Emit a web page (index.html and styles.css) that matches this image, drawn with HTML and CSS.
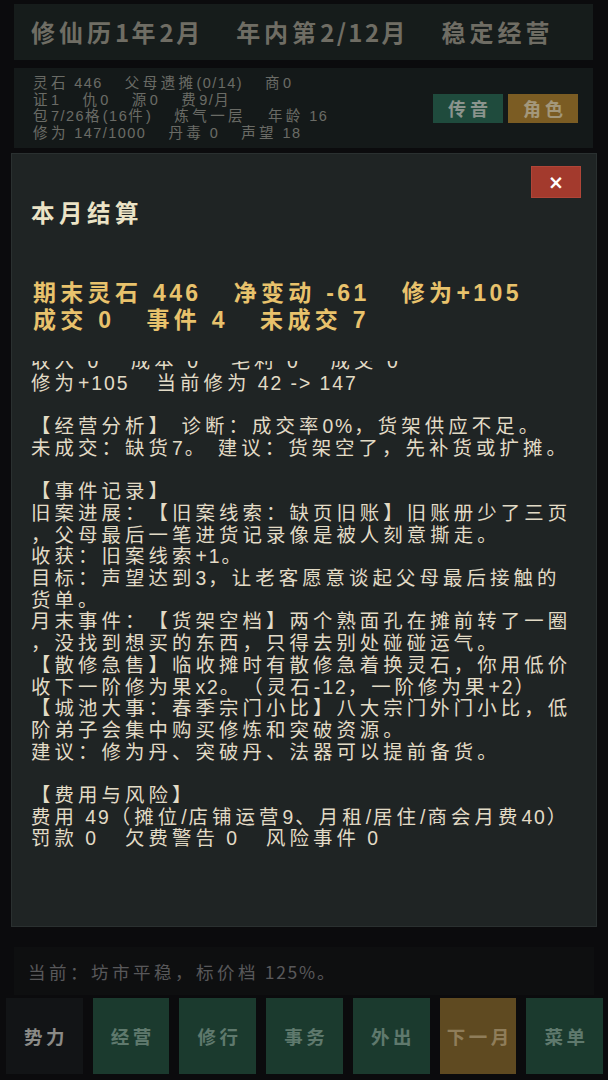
FILE: index.html
```html
<!DOCTYPE html>
<html lang="zh-CN">
<head>
<meta charset="utf-8">
<title>修仙坊市</title>
<link rel="stylesheet" href="styles.css">
</head>
<body>
<div class="app">
  <header class="topbar">
    <span>修仙历<span class="n">1</span>年<span class="n">2</span>月</span>
    <span>年内第<span class="n">2/12</span>月</span>
    <span>稳定经营</span>
  </header>

  <section class="status">
    <div class="stats">
      <div class="stat-row"><span>灵石<span class="n"> 446</span></span><span>父母遗摊<span class="n">(0/14)</span></span><span>商<span class="n">0</span></span></div>
      <div class="stat-row"><span>证<span class="n">1</span></span><span>仇<span class="n">0</span></span><span>源<span class="n">0</span></span><span>费<span class="n">9/</span>月</span></div>
      <div class="stat-row"><span>包<span class="n">7/26</span>格<span class="n">(16</span>件<span class="n">)</span></span><span>炼气一层</span><span>年龄<span class="n"> 16</span></span></div>
      <div class="stat-row"><span>修为<span class="n"> 147/1000</span></span><span>丹毒<span class="n"> 0</span></span><span>声望<span class="n"> 18</span></span></div>
    </div>
    <div class="status-actions">
      <button class="chip chip-green">传音</button>
      <button class="chip chip-gold">角色</button>
    </div>
  </section>

  <main class="stage"></main>

  <div class="ticker">当前：坊市平稳，标价档<span class="n"> 125%</span>。</div>

  <nav class="dock">
    <button class="dock-btn dock-dark">势力</button>
    <button class="dock-btn">经营</button>
    <button class="dock-btn">修行</button>
    <button class="dock-btn">事务</button>
    <button class="dock-btn">外出</button>
    <button class="dock-btn dock-gold">下一月</button>
    <button class="dock-btn">菜单</button>
  </nav>
</div>

<div class="backdrop">
  <div class="modal">
    <div class="modal-top">
      <button class="close">×</button>
    </div>
    <h2 class="modal-title">本月结算</h2>
    <div class="summary">
      <div class="summary-row"><span>期末灵石 <span class="n">446</span></span><span>净变动 <span class="n">-61</span></span><span>修为<span class="n">+105</span></span></div>
      <div class="summary-row"><span>成交 <span class="n">0</span></span><span>事件 <span class="n">4</span></span><span>未成交 <span class="n">7</span></span></div>
    </div>
    <div class="report">
      <div class="log">
        <div class="log-block">
          <p class="ln">收入 0   成本 0   毛利 0   成交 0</p>
          <p class="ln ln-row"><span>修为<span class="n">+105</span></span><span>当前修为<span class="n"> 42 -&gt; 147</span></span></p>
        </div>
        <div class="log-block">
          <p class="ln">【经营分析】 诊断：成交率<span class="n">0%</span>，货架供应不足。</p>
          <p class="ln">未成交：缺货<span class="n">7</span>。 建议：货架空了，先补货或扩摊。</p>
        </div>
        <div class="log-block">
          <p class="ln">【事件记录】</p>
          <p class="ln">旧案进展：【旧案线索：缺页旧账】旧账册少了三页</p>
          <p class="ln">，父母最后一笔进货记录像是被人刻意撕走。</p>
          <p class="ln">收获：旧案线索<span class="n">+1</span>。</p>
          <p class="ln">目标：声望达到<span class="n">3</span>，让老客愿意谈起父母最后接触的</p>
          <p class="ln">货单。</p>
          <p class="ln">月末事件：【货架空档】两个熟面孔在摊前转了一圈</p>
          <p class="ln">，没找到想买的东西，只得去别处碰碰运气。</p>
          <p class="ln">【散修急售】临收摊时有散修急着换灵石，你用低价</p>
          <p class="ln">收下一阶修为果<span class="n">x2</span>。（灵石<span class="n">-12</span>，一阶修为果<span class="n">+2</span>）</p>
          <p class="ln">【城池大事：春季宗门小比】八大宗门外门小比，低</p>
          <p class="ln">阶弟子会集中购买修炼和突破资源。</p>
          <p class="ln">建议：修为丹、突破丹、法器可以提前备货。</p>
        </div>
        <div class="log-block">
          <p class="ln">【费用与风险】</p>
          <p class="ln">费用<span class="n"> 49</span>（摊位<span class="n">/</span>店铺运营<span class="n">9</span>、月租<span class="n">/</span>居住<span class="n">/</span>商会月费<span class="n">40</span>）</p>
          <p class="ln ln-row"><span>罚款<span class="n"> 0</span></span><span>欠费警告<span class="n"> 0</span></span><span>风险事件<span class="n"> 0</span></span></p>
        </div>
      </div>
    </div>
  </div>
</div>
</body>
</html>
```

FILE: styles.css
```css
* { box-sizing: border-box; }

html, body {
  margin: 0;
  height: 100%;
}

body {
  background: #111114;
  font-family: "Noto Sans CJK SC", "Noto Sans", sans-serif;
  text-spacing-trim: space-all;
  overflow: hidden;
}

button {
  font-family: inherit;
}

/* Latin runs: the wide CJK tracking would spread digits too far */
.n {
  letter-spacing: 0.1em;
}

.app {
  height: 100vh;
  display: flex;
  flex-direction: column;
}

/* top bar */
.topbar {
  flex: none;
  margin: 4px 15px 0 14px;
  height: 56px;
  background: #222b2a;
  display: flex;
  align-items: center;
  gap: 32px;
  padding: 0 0 2px 17px;
  font-size: 24px;
  font-weight: 700;
  letter-spacing: 4px;
  color: #aba89a;
  white-space: nowrap;
}

/* status panel */
.status {
  flex: none;
  margin: 8px 15px 0 14px;
  height: 80px;
  background: #202727;
  display: flex;
  align-items: center;
  justify-content: space-between;
  padding: 0 15px 0 19px;
}

.stats {
  font-family: "Liberation Sans", "Noto Sans CJK SC", sans-serif;
  font-size: 14.5px;
  line-height: 16.5px;
  letter-spacing: 3.4px;
  color: #a3a59d;
}

.stat-row {
  display: flex;
  gap: 22px;
  white-space: nowrap;
}

.status-actions {
  display: flex;
  gap: 5px;
}

.chip {
  width: 70px;
  height: 29px;
  border: 0;
  padding: 0 0 0 4px;
  font-size: 18px;
  font-weight: 700;
  line-height: 29px;
  letter-spacing: 4px;
}

.chip-green { background: #30745e; color: #d6e4da; }
.chip-gold  { background: #bd8e37; color: #fbe8bd; }

.stage { flex: 1; }

/* ticker */
.ticker {
  flex: none;
  margin: 0 14px;
  height: 48px;
  background: #16171a;
  display: flex;
  align-items: center;
  padding-left: 14px;
  font-size: 17.5px;
  letter-spacing: 3.5px;
  color: #88888a;
  white-space: pre;
}

/* bottom dock */
.dock {
  flex: none;
  display: flex;
  gap: 10px;
  padding: 3px 5px 6px 6px;
}

.dock-btn {
  flex: 1;
  height: 76px;
  border: 0;
  padding: 0 0 0 3.5px;
  background: #2a5a48;
  color: #93bba8;
  font-size: 18.5px;
  font-weight: 700;
  letter-spacing: 3.5px;
}

.dock-dark { background: #1c1f23; color: #d6d6d0; }
.dock-gold { background: #927233; color: #dcc18a; }

/* modal */
.backdrop {
  position: fixed;
  inset: 0;
  background: rgba(0, 0, 0, 0.35);
  padding: 153px 0 0 11px;
}

.modal {
  width: 586px;
  height: 774px;
  background: #1f2424;
  border: 1px solid #2a3030;
  padding: 12px 15px 12px 19px;
  display: flex;
  flex-direction: column;
}

.modal-top {
  display: flex;
  justify-content: flex-end;
}

.close {
  width: 50px;
  height: 32px;
  background: #a33a2d;
  border: 1px solid #b04538;
  color: #ffffff;
  font-family: "DejaVu Sans", sans-serif;
  font-size: 19px;
  font-weight: 700;
  line-height: 1;
  padding: 0;
}

.modal-title {
  margin: 0;
  font-size: 23.5px;
  line-height: 28px;
  font-weight: 700;
  letter-spacing: 4.5px;
  color: #ebe3c6;
}

.summary {
  margin-top: 52px;
  padding: 2px 0 0 2px;
  font-family: "Liberation Sans", "Noto Sans CJK SC", sans-serif;
  font-size: 23px;
  line-height: 27px;
  font-weight: 700;
  letter-spacing: 4.3px;
  color: #e8c26c;
}

.summary .n {
  letter-spacing: 0.15em;
}

.summary-row {
  display: flex;
  gap: 32px;
  white-space: pre;
}

.report {
  margin-top: 27px;
  flex: 1;
  overflow: hidden;
}

.log {
  margin-top: -10px;
  font-family: "Liberation Sans", "Noto Sans CJK SC", sans-serif;
  font-size: 19.4px;
  line-height: 21.7px;
  letter-spacing: 4.1px;
  color: #e2dbc6;
}

.log-block + .log-block {
  margin-top: 21.7px;
}

.ln {
  margin: 0;
  white-space: pre;
}

.ln-row {
  display: flex;
  gap: 27px;
}
```
